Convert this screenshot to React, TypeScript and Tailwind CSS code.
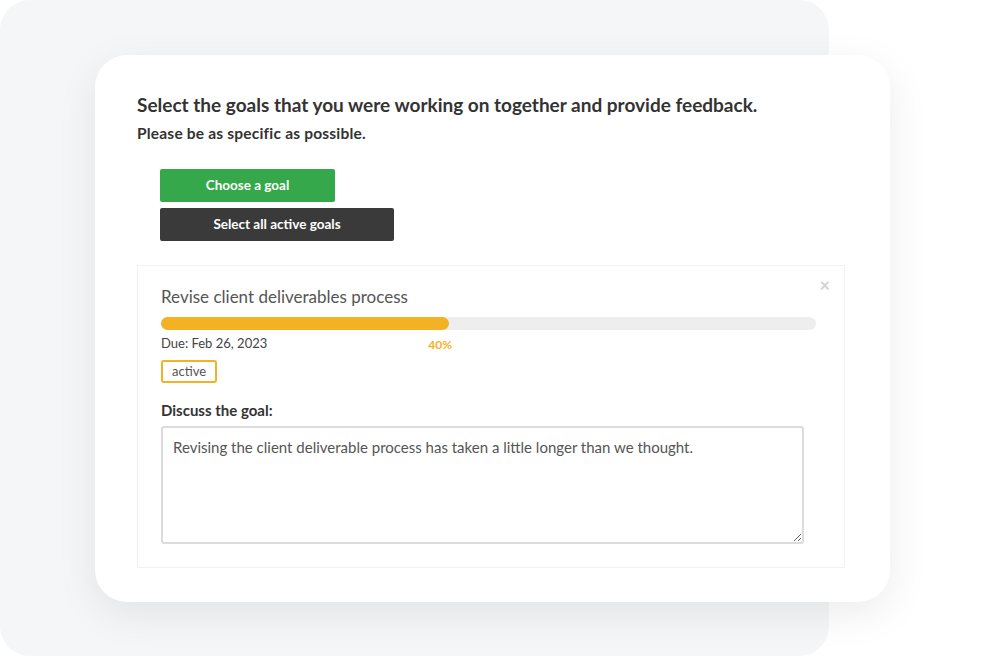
import React from 'react';

const font = { fontFamily: 'Lato, "Noto Sans", sans-serif' };

function GoalCard() {
  return (
    <div className="relative mt-6 border border-[#f1f1f1] bg-white pt-[19px] pl-[23px] pr-7 pb-[23px]">
      <span className="absolute right-[14px] top-[10px] text-[18px] font-bold leading-none text-[#d2d2d2]">×</span>
      <h3 className="text-[17px] leading-6 text-[#555]">Revise client deliverables process</h3>
      <div className="mt-[8px] h-[13px] w-full rounded-full bg-[#eeeeee]">
        <div className="h-full rounded-full bg-[#f3b124]" style={{ width: '44%' }} />
      </div>
      <div className="mt-[3px] flex">
        <span className="text-[13px] leading-5 text-[#444]">Due: Feb 26, 2023</span>
        <span className="ml-[161px] mt-[2px] text-[12px] font-bold leading-5 text-[#f3b124]">40%</span>
      </div>
      <span className="mt-[5px] inline-flex h-[23px] items-center rounded-[3px] border-2 border-[#f3b124] px-[9px] text-[13px] text-[#555]">
        active
      </span>
      <p className="mt-[17px] text-[15px] font-bold leading-5 text-[#333]">Discuss the goal:</p>
      <textarea
        className="mt-[6px] block h-[118px] w-[643px] resize-y rounded-[3px] border-2 border-[#dcdcdc] px-[10px] py-[9px] text-[15px] leading-5 text-[#555] outline-none"
        style={font}
        defaultValue="Revising the client deliverable process has taken a little longer than we thought."
      />
    </div>
  );
}

export default function App() {
  return (
    <div className="relative h-[656px] w-[984px] overflow-hidden bg-white" style={font}>
      {/* backdrop panel */}
      <div className="absolute left-0 top-0 h-[656px] w-[829px] rounded-[30px] bg-[#f5f6f8]" />

      <div className="relative pl-[95px] pt-[55px]">
        <div className="h-[547px] w-[795px] rounded-[32px] bg-white pl-[42px] pr-[45px] pt-[38px] shadow-[0_12px_40px_rgba(0,0,0,0.08)]">
          <h1 className="text-[19px] font-bold leading-6 text-[#333]">
            Select the goals that you were working on together and provide feedback.
          </h1>
          <h2 className="mt-[6px] text-[15.5px] font-bold leading-5 tracking-[0.2px] text-[#333]">
            Please be as specific as possible.
          </h2>

          <div className="mt-[26px] flex flex-col gap-[6px] pl-[23px]">
            <button className="h-[33px] w-[175px] rounded-[2px] bg-[#34a84a] text-[13.5px] font-bold text-white">
              Choose a goal
            </button>
            <button className="h-[33px] w-[234px] rounded-[2px] bg-[#3a3a3a] text-[13.5px] font-bold text-white">
              Select all active goals
            </button>
          </div>

          <GoalCard />
        </div>
      </div>
    </div>
  );
}
